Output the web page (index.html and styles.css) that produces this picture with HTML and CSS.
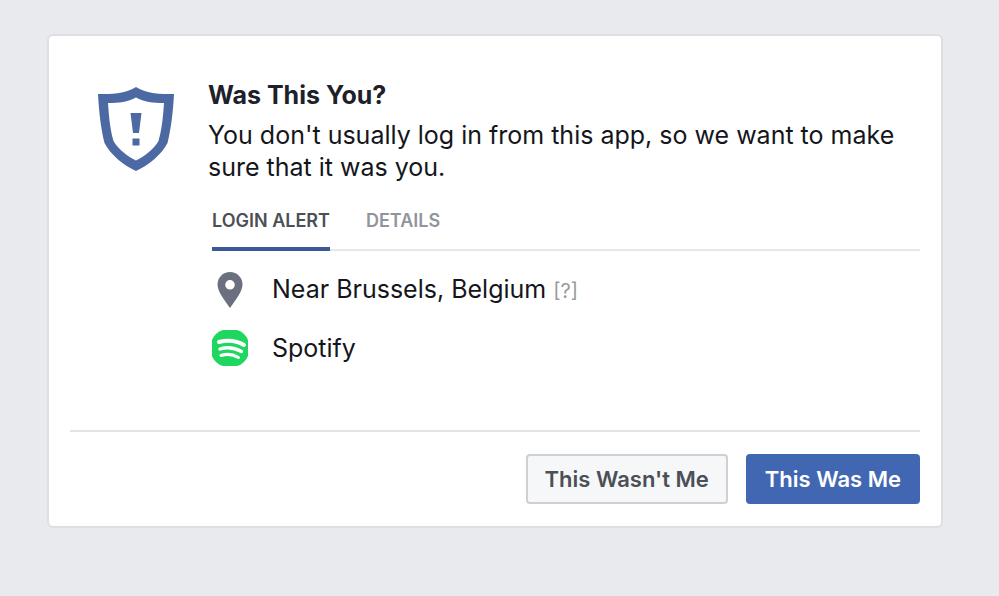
FILE: index.html
```html
<!DOCTYPE html>
<html lang="en">
<head>
  <meta charset="UTF-8">
  <meta name="viewport" content="width=device-width, initial-scale=1.0">
  <title>Was This You?</title>
  <link rel="stylesheet" href="styles.css">
</head>
<body>
  <main class="card">
    <div class="content">
      <svg class="shield" viewBox="0 0 76 84" aria-hidden="true">
        <path fill="#4c69a4" fill-rule="evenodd" d="M0 7C16 7.500 29 6 38 0C47 6 60 7.500 76 7C75 26 73 42 69.500 56C64 67 51 78 38 84C25 78 12 67 6.500 56C3 42 1 26 0 7ZM10 16C11 31 12.500 44 15.500 54C20 62 29 69 38 73.500C47 69 56 62 60.500 54C63.500 44 65 31 66 16C55 16 46 15 38 10.500C30 15 21 16 10 16Z"/>
        <path fill="#4c69a4" d="M32.500 26H43.500L41 46H35ZM34.500 51.500H41.500V58.500H34.500Z"/>
      </svg>
      <div class="details">
        <h1>Was This You?</h1>
        <p class="message">You don't usually log in from this app, so we want to make sure that it was you.</p>
        <div class="tabs" role="tablist">
          <button type="button" class="tab active" role="tab" aria-selected="true">LOGIN ALERT</button>
          <button type="button" class="tab" role="tab" aria-selected="false">DETAILS</button>
        </div>
        <ul class="login-info">
          <li>
            <svg class="info-icon" viewBox="0 0 36 36" aria-hidden="true">
              <path fill="#6b7080" fill-rule="evenodd" d="M18 0C25 0 30.500 5.500 30.500 12.500C30.500 20 23 28.500 18 36C13 28.500 5.500 20 5.500 12.500C5.500 5.500 11 0 18 0ZM18 8A4.800 4.800 0 1 0 18 17.600A4.800 4.800 0 1 0 18 8Z"/>
            </svg>
            <span>Near Brussels, Belgium <a href="#" class="help">[?]</a></span>
          </li>
          <li>
            <svg class="info-icon" viewBox="0 0 36 36" aria-hidden="true">
              <path fill="#1fd75f" d="M11 0H25Q29 1 32 4Q35 7 36 10V26Q35 29 32 32Q29 35 25 36H11Q7 35 4 32Q1 29 0 26V10Q1 7 4 4Q7 1 11 0Z"/>
              <g fill="none" stroke="#fff" stroke-linecap="round">
                <path stroke-width="4" d="M7 12Q21 8.500 32 15"/>
                <path stroke-width="3.400" d="M8 19Q19 15.500 29.500 21.500"/>
                <path stroke-width="3" d="M9 25.500Q18 22.500 26.500 27.500"/>
              </g>
            </svg>
            <span>Spotify</span>
          </li>
        </ul>
      </div>
    </div>
    <div class="actions">
      <button type="button" class="button">This Wasn't Me</button>
      <button type="button" class="button primary">This Was Me</button>
    </div>
  </main>
</body>
</html>
```
FILE: styles.css
```css
* {
  box-sizing: border-box;
}

body {
  margin: 0;
  padding: 34px 56px 34px 47px;
  background-color: #e9eaee;
  color: #1d2129;
  font-family: Inter, "Liberation Sans", sans-serif;
  font-size: 25px;
  line-height: 32px;
}

button {
  font-family: inherit;
  cursor: pointer;
}

.card {
  padding: 43px 21px 22px;
  background-color: #fff;
  border: 2px solid #dddfe2;
  border-radius: 6px;
}

/* Message and login information */
.content {
  display: flex;
  align-items: flex-start;
  gap: 34px;
  padding: 0 0 64px 28px;
}

.shield {
  flex: none;
  width: 76px;
  height: 84px;
  margin-top: 8px;
}

.details {
  flex: 1;
}

h1 {
  margin: 0 0 8px;
  font-size: 25px;
  font-weight: 700;
  line-height: 32px;
}

.message {
  margin: 0;
  color: #14161c;
}

.tabs {
  display: flex;
  gap: 36px;
  margin: 24px 0 0 4px;
  border-bottom: 2px solid #e5e8ea;
}

.tab {
  margin-bottom: -2px;
  padding: 0 0 12px;
  background: none;
  border: none;
  border-bottom: 4px solid transparent;
  color: #90949c;
  font-size: 18px;
  font-weight: 600;
  line-height: 28px;
}

.tab.active {
  border-color: #3b5998;
  color: #4b4f56;
}

.login-info {
  display: grid;
  gap: 22px;
  margin: 21px 0 0 4px;
  padding: 0;
  color: #14161c;
  list-style: none;
}

.login-info li {
  display: flex;
  align-items: center;
  gap: 24px;
}

.info-icon {
  flex: none;
  width: 36px;
  height: 36px;
}

.help {
  color: #9a9a9a;
  font-size: 20px;
  text-decoration: none;
}

/* Footer buttons */
.actions {
  display: flex;
  justify-content: flex-end;
  gap: 18px;
  padding-top: 22px;
  border-top: 2px solid #e2e4e7;
}

.button {
  padding: 8px 17px;
  background-color: #f6f7f9;
  border: 2px solid #ced0d4;
  border-radius: 4px;
  color: #4b4f56;
  font-size: 22px;
  font-weight: 600;
  line-height: 30px;
}

.primary {
  background-color: #4267b2;
  border-color: #4267b2;
  color: #fff;
}
```
